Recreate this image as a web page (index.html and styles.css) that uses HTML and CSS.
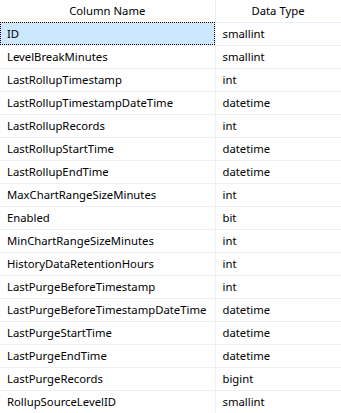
FILE: index.html
```html
<!DOCTYPE html>
<html lang="en">
<head>
  <meta charset="UTF-8" />
  <title>Table Columns</title>
  <link rel="stylesheet" href="styles.css">
</head>
<body>
  <table class="grid">
    <colgroup>
      <col class="col-name" />
      <col class="col-type" />
    </colgroup>
    <thead>
      <tr>
        <th>Column Name</th>
        <th>Data Type</th>
      </tr>
    </thead>
    <tbody>
      <tr><td class="selected">ID</td><td>smallint</td></tr>
      <tr><td>LevelBreakMinutes</td><td>smallint</td></tr>
      <tr><td>LastRollupTimestamp</td><td>int</td></tr>
      <tr><td>LastRollupTimestampDateTime</td><td>datetime</td></tr>
      <tr><td>LastRollupRecords</td><td>int</td></tr>
      <tr><td>LastRollupStartTime</td><td>datetime</td></tr>
      <tr><td>LastRollupEndTime</td><td>datetime</td></tr>
      <tr><td>MaxChartRangeSizeMinutes</td><td>int</td></tr>
      <tr><td>Enabled</td><td>bit</td></tr>
      <tr><td>MinChartRangeSizeMinutes</td><td>int</td></tr>
      <tr><td>HistoryDataRetentionHours</td><td>int</td></tr>
      <tr><td>LastPurgeBeforeTimestamp</td><td>int</td></tr>
      <tr><td>LastPurgeBeforeTimestampDateTime</td><td>datetime</td></tr>
      <tr><td>LastPurgeStartTime</td><td>datetime</td></tr>
      <tr><td>LastPurgeEndTime</td><td>datetime</td></tr>
      <tr><td>LastPurgeRecords</td><td>bigint</td></tr>
      <tr><td>RollupSourceLevelID</td><td>smallint</td></tr>
    </tbody>
  </table>
</body>
</html>
```

FILE: styles.css
```css
* {
  box-sizing: border-box;
}

body {
  margin: 0;
  background: #fff;
  font-family: "Noto Sans", "Open Sans", sans-serif;
  font-size: 11.3px;
  color: #000;
}

.grid {
  border-collapse: collapse;
  table-layout: fixed;
  width: 341px;
}

.col-name {
  width: 215px;
}

.col-type {
  width: 126px;
}

/* header row */
.grid th {
  height: 22px;
  padding: 0 0 1px;
  font-weight: normal;
  text-align: center;
  background: #fff;
  border-bottom: 1px solid #e5edf7;
  border-right: 1px solid #e5edf7;
}

/* body cells */
.grid td {
  height: 23px;
  padding: 0 4px 1px 7px;
  white-space: nowrap;
  overflow: hidden;
  border-bottom: 1px solid #f0f0f0;
  border-right: 1px solid #f0f0f0;
}

.grid tr td:last-child,
.grid tr th:last-child {
  border-right: 1px solid #e3e3e3;
}

/* focused cell */
.grid td.selected {
  background: #cce8ff;
  outline: 1px dotted #000;
  outline-offset: -1px;
}
```
